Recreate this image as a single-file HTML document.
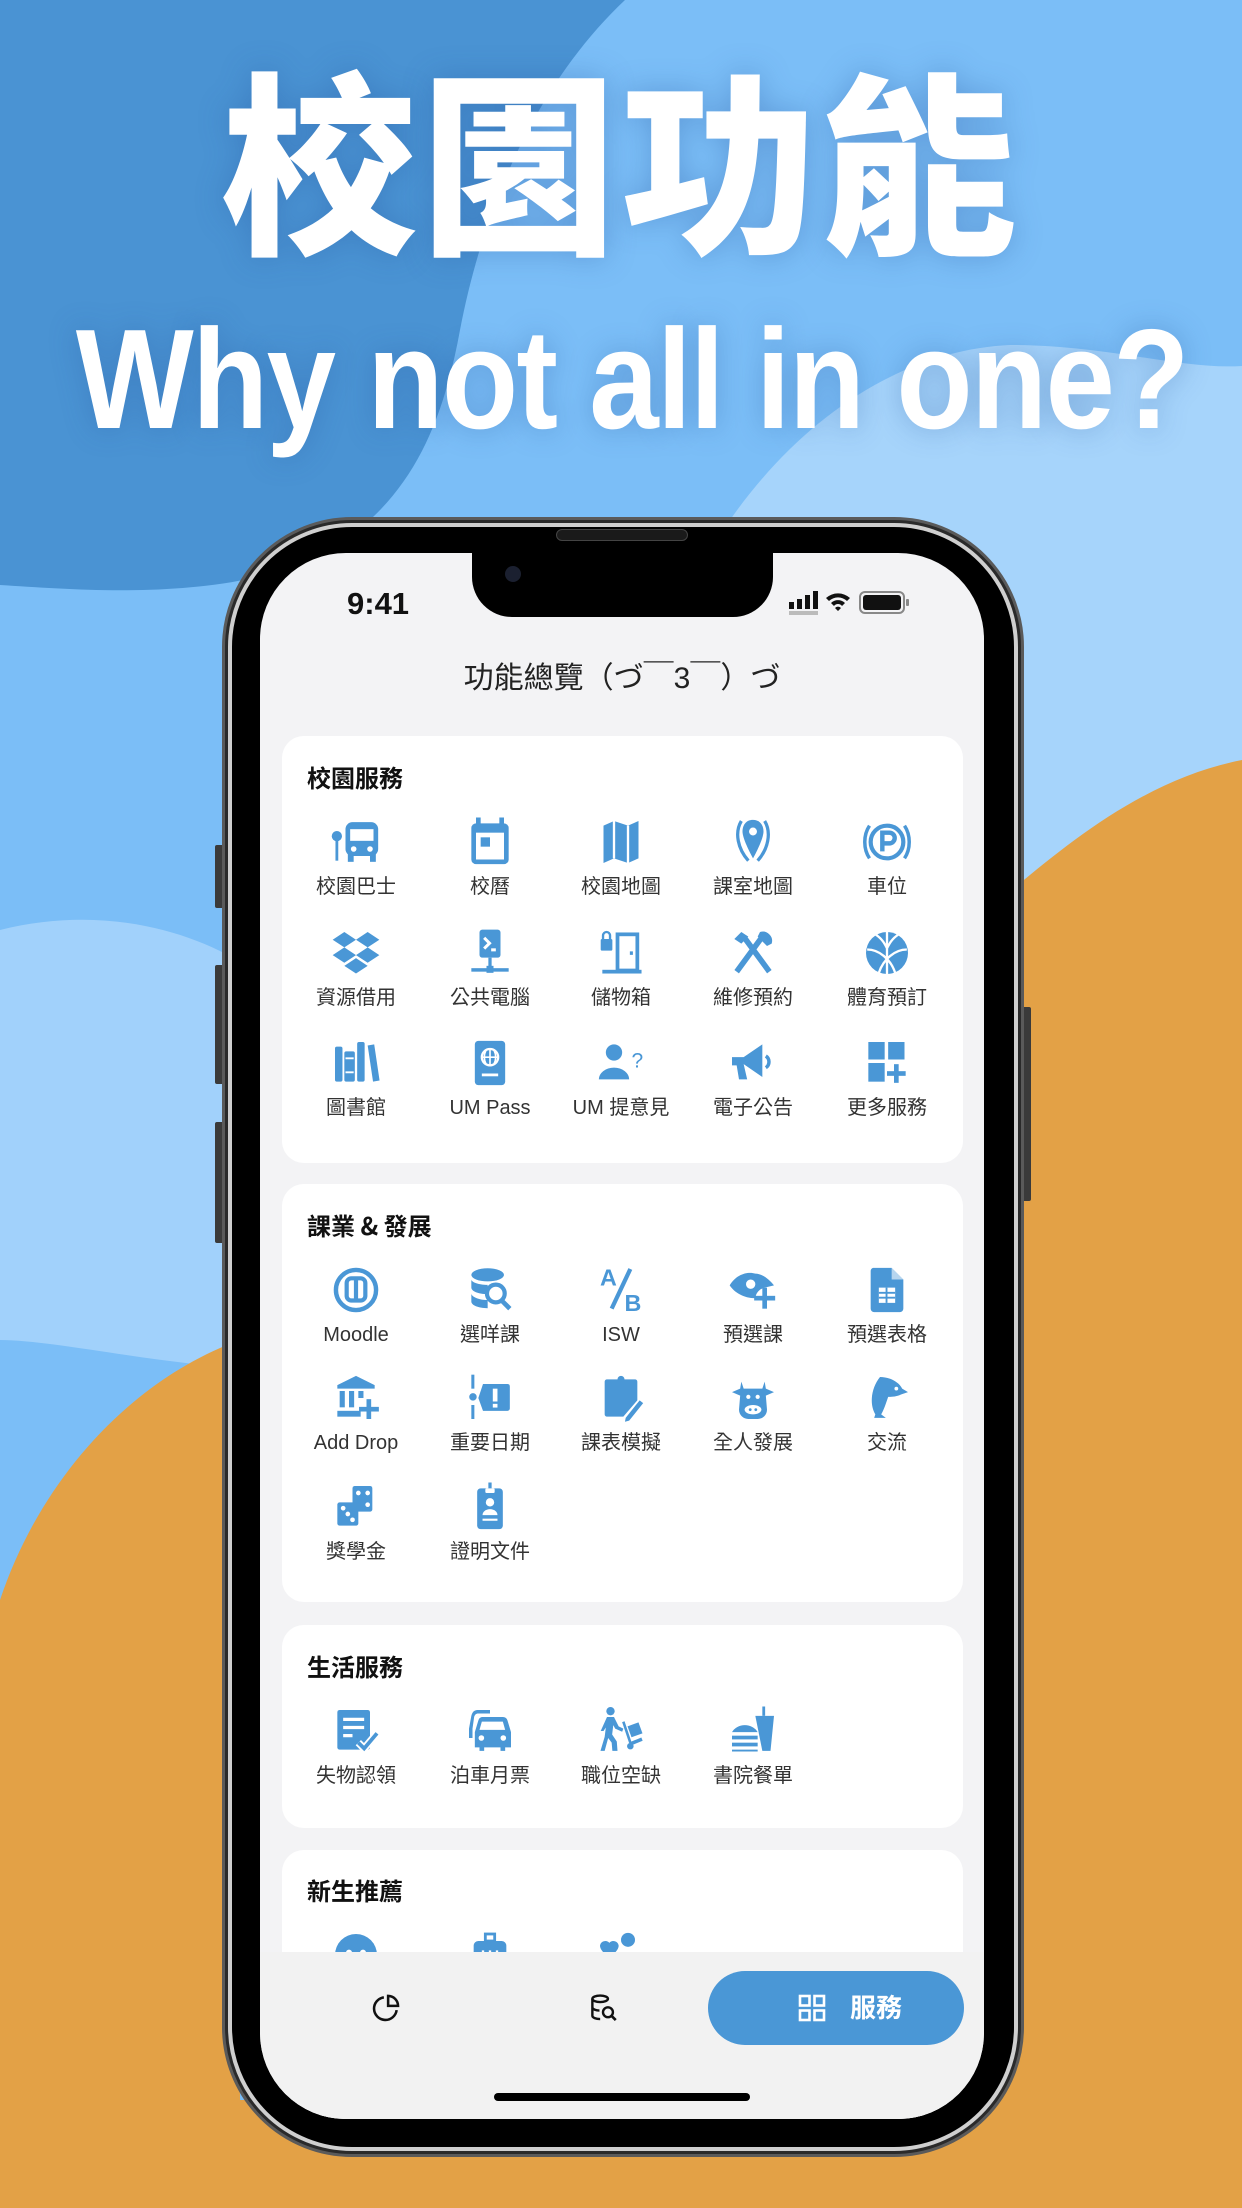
<!DOCTYPE html>
<html><head><meta charset="utf-8">
<style>
*{margin:0;padding:0;box-sizing:border-box}
body{width:1242px;height:2208px;overflow:hidden;position:relative;background:#7bbef7;font-family:"Liberation Sans","Noto Sans CJK TC",sans-serif}
.abs{position:absolute}
.t1{position:absolute;left:0;width:1242px;top:40px;text-align:center;font-family:"Noto Sans CJK TC",sans-serif;font-weight:900;font-size:196px;line-height:230px;color:#fff;letter-spacing:4px;text-shadow:0 0 30px rgba(40,90,160,.35)}
.t2{position:absolute;left:0;width:1242px;top:300px;text-align:center;font-family:"Liberation Sans",sans-serif;font-weight:bold;font-size:142px;line-height:160px;color:#fff;letter-spacing:-2px;text-shadow:0 0 30px rgba(40,90,160,.35);white-space:nowrap}
.t2 span{display:inline-block;transform:scaleX(.88)}
.screen{position:absolute;left:260px;top:553px;width:724px;height:1566px;border-radius:86px;overflow:hidden;background:#f3f3f5}
.card{position:absolute;left:22px;width:681px;background:#fff;border-radius:22px}
.hd{position:absolute;left:25px;font-family:"Noto Sans CJK TC",sans-serif;font-weight:bold;font-size:24px;color:#111;line-height:30px}
.it{position:absolute;width:130px;text-align:center}
.it svg{display:block;margin:0 auto;width:56px;height:56px;fill:#4a97d6}
.it span{display:block;margin-top:5px;font-family:"Liberation Sans","Noto Sans CJK TC",sans-serif;font-size:20px;line-height:24px;color:#333;white-space:nowrap}
</style></head><body>
<svg class="abs" style="left:0;top:0" width="1242" height="2208" viewBox="0 0 1242 2208">
<path d="M0 0H625C540 80 485 200 460 330C440 440 400 520 300 565C200 600 80 590 0 585Z" fill="#4a93d3"/>
<path d="M0 930C120 900 230 940 290 1000L290 1370C180 1370 60 1340 0 1340Z" fill="#a5d3fb" opacity=".9"/>
<path d="M730 520C800 420 900 350 1010 345C1110 345 1180 370 1242 366V900H730Z" fill="#a6d4fb"/>
<path d="M1242 760C1140 780 1060 850 1000 900L1000 2208H1242Z" fill="#e3a146"/>
<path d="M0 1600C40 1480 130 1380 240 1340L240 2208H0Z" fill="#e3a146"/>
<rect x="200" y="2100" width="850" height="108" fill="#e3a146"/>
</svg>
<div class="t1">校園功能</div>
<div class="t2"><span>Why not all in one?</span></div>

<div class="abs" style="left:215px;top:845px;width:10px;height:63px;background:#3a3a3a;border-radius:2px"></div>
<div class="abs" style="left:215px;top:965px;width:10px;height:119px;background:#3a3a3a;border-radius:2px"></div>
<div class="abs" style="left:215px;top:1122px;width:10px;height:121px;background:#3a3a3a;border-radius:2px"></div>
<div class="abs" style="left:1021px;top:1007px;width:10px;height:194px;background:#3a3a3a;border-radius:2px"></div>
<div class="abs" style="left:222px;top:517px;width:802px;height:1640px;border-radius:130px;background:#2a2a2a;border:3px solid #5a5a5a"></div>
<div class="abs" style="left:228px;top:523px;width:790px;height:1628px;border-radius:124px;background:#000;border:4px solid #cfcfcf"></div>
<div class="abs" style="left:234px;top:529px;width:778px;height:1616px;border-radius:118px;background:#000"></div>
<div class="abs" style="left:556px;top:529px;width:132px;height:12px;border-radius:6px;background:#1a1a1a;border:1px solid #444"></div>

<div class="screen">
 <div class="abs" style="left:212px;top:0;width:301px;height:64px;background:#000;border-radius:0 0 40px 40px"></div>
 <div class="abs" style="left:245px;top:13px;width:16px;height:16px;border-radius:50%;background:#1b2030"></div>
 <div class="abs" style="left:87px;top:33px;font-weight:bold;font-size:31px;color:#111">9:41</div>
 <svg class="abs" style="left:529px;top:36px" width="150" height="30" viewBox="0 0 150 30">
  <rect x="0" y="13" width="5" height="7" fill="#111"/><rect x="8" y="10" width="5" height="10" fill="#111"/><rect x="16" y="6" width="5" height="14" fill="#111"/><rect x="24" y="2" width="5" height="18" fill="#111"/>
  <rect x="0" y="22" width="29" height="4" fill="#bbb"/>
  <path d="M37 9a18 18 0 0 1 24 0l-3 3a13 13 0 0 0-18 0z M42 14a10 10 0 0 1 14 0l-3 3a5 5 0 0 0-8 0z M49 22l-3-3a4 4 0 0 1 6 0z" fill="#111"/>
  <rect x="71" y="3" width="44" height="21" rx="5" fill="none" stroke="#888" stroke-width="2"/><rect x="74" y="6" width="38" height="15" rx="3" fill="#111"/><rect x="117" y="10" width="3" height="7" rx="1" fill="#888"/>
 </svg>
 <div class="abs" style="left:0;width:724px;top:108px;text-align:center;font-family:'Liberation Sans','Noto Sans CJK TC',sans-serif;font-size:30px;color:#222;line-height:36px">功能總覽（づ￣3￣）づ</div>

 <div class="card" style="top:183px;height:427px"><div class="hd" style="top:26px">校園服務</div></div>
 <div class="card" style="top:631px;height:418px"><div class="hd" style="top:26px">課業 &amp; 發展</div></div>
 <div class="card" style="top:1072px;height:203px"><div class="hd" style="top:26px">生活服務</div></div>
 <div class="card" style="top:1297px;height:300px"><div class="hd" style="top:25px">新生推薦</div></div>

 <div class="it" style="left:31px;top:261px"><svg viewBox="0 0 24 24"><circle cx="3.8" cy="9.5" r="2.2"/><rect x="3.2" y="10" width="1.2" height="10"/><rect x="7.5" y="3.5" width="14" height="14.5" rx="3"/><rect x="9.5" y="6.5" width="10" height="5" fill="#fff"/><circle cx="11" cy="15" r="1.2" fill="#fff"/><circle cx="18" cy="15" r="1.2" fill="#fff"/><rect x="8.5" y="17" width="2.5" height="3.5"/><rect x="18" y="17" width="2.5" height="3.5"/></svg><span>校園巴士</span></div>
 <div class="it" style="left:165px;top:261px"><svg viewBox="0 0 24 24"><rect x="4" y="4" width="16" height="17.5" rx="2"/><rect x="6" y="1.5" width="2" height="4"/><rect x="16" y="1.5" width="2" height="4"/><rect x="6" y="8" width="12" height="11.5" fill="#fff"/><rect x="8" y="10" width="4" height="4"/></svg><span>校曆</span></div>
 <div class="it" style="left:296px;top:261px"><svg viewBox="0 0 24 24"><path d="M4.5 5L9 3L15 5L19.5 3V19L15 21L9 19L4.5 21Z"/><path d="M9 3V19M15 5V21" stroke="#fff" stroke-width="1"/></svg><span>校園地圖</span></div>
 <div class="it" style="left:428px;top:261px"><svg viewBox="0 0 24 24"><path d="M12 2.5C9 2.5 7.5 4.8 7.5 7.5C7.5 11 12 19 12 19C12 19 16.5 11 16.5 7.5C16.5 4.8 15 2.5 12 2.5Z"/><circle cx="12" cy="7.5" r="1.7" fill="#fff"/><path d="M7 3C4 8 5.5 15 10 20M17 3C20 8 18.5 15 14 20" fill="none" stroke="#4a97d6" stroke-width="1.4"/></svg><span>課室地圖</span></div>
 <div class="it" style="left:562px;top:261px"><svg viewBox="0 0 24 24"><circle cx="12" cy="12" r="7" fill="none" stroke="#4a97d6" stroke-width="1.8"/><path d="M10 16V8h3a2.3 2.3 0 0 1 0 4.6h-3" fill="none" stroke="#4a97d6" stroke-width="1.9"/><path d="M4.5 5C1.8 9 1.8 15 4.5 19M19.5 5c2.7 4 2.7 10 0 14" fill="none" stroke="#4a97d6" stroke-width="1.5"/></svg><span>車位</span></div>
 <div class="it" style="left:31px;top:372px"><svg viewBox="0 0 24 24"><path d="M7 3L12 6.3L7 9.6L2 6.3Z M17 3L22 6.3L17 9.6L12 6.3Z M7 9.6L12 12.9L7 16.2L2 12.9Z M17 9.6L22 12.9L17 16.2L12 12.9Z M12 14.2L17 17.5L12 20.8L7 17.5Z"/></svg><span>資源借用</span></div>
 <div class="it" style="left:165px;top:372px"><svg viewBox="0 0 24 24"><rect x="7.5" y="2" width="9" height="12" rx="1.2"/><path d="M9.5 5.5l2.3 2.3-2.3 2.3" fill="none" stroke="#fff" stroke-width="1.3"/><rect x="12.5" y="10" width="2" height="1.3" fill="#fff"/><rect x="11.3" y="14" width="1.4" height="4.5"/><rect x="4" y="18.5" width="16" height="1.5"/><rect x="10.5" y="17.5" width="3" height="3"/></svg><span>公共電腦</span></div>
 <div class="it" style="left:296px;top:372px"><svg viewBox="0 0 24 24"><rect x="3.3" y="6" width="5" height="5" rx=".6"/><path d="M4.3 6V4.5a1.5 1.5 0 0 1 3 0V6" fill="none" stroke="#4a97d6" stroke-width="1"/><rect x="10.5" y="4" width="8.5" height="15.5" fill="none" stroke="#4a97d6" stroke-width="1.6"/><rect x="15.8" y="11.3" width="1.3" height="1.5"/><rect x="4" y="19.2" width="16.8" height="1.6"/></svg><span>儲物箱</span></div>
 <div class="it" style="left:428px;top:372px"><svg viewBox="0 0 24 24"><path d="M5 20L16 5M8 5L19 20" stroke="#4a97d6" stroke-width="2.4"/><path d="M4 6l3-3 3 2-3 3z M15 3a4 4 0 0 1 5 5l-2 1-4-4z"/></svg><span>維修預約</span></div>
 <div class="it" style="left:562px;top:372px"><svg viewBox="0 0 24 24"><circle cx="12" cy="12" r="9"/><path d="M12 3v18M3.5 10.5c5 0 10 4 12 10M20.5 10.5c-5 0-10 4-12 10M7 4c3 2 4 4 5 6M17 4c-3 2-4 4-5 6" fill="none" stroke="#fff" stroke-width="1"/></svg><span>體育預訂</span></div>
 <div class="it" style="left:31px;top:482px"><svg viewBox="0 0 24 24"><rect x="3" y="5" width="3.2" height="15" rx=".8"/><rect x="7" y="7" width="4.5" height="13" rx=".8"/><rect x="12.5" y="3" width="3.2" height="17" rx=".8"/><path d="M17 4.5l2.8-.5 2.3 15.5-2.8.5z"/><path d="M7.5 10h3.5M7.5 16h3.5" stroke="#fff" stroke-width=".8"/></svg><span>圖書館</span></div>
 <div class="it" style="left:165px;top:482px"><svg viewBox="0 0 24 24"><rect x="5.5" y="2.5" width="13" height="19" rx="1.5"/><circle cx="12" cy="9.5" r="3.5" fill="none" stroke="#fff" stroke-width="1"/><path d="M8.5 9.5h7M12 6v7M10.3 6.5c-1 2-1 4 0 6M13.7 6.5c1 2 1 4 0 6" fill="none" stroke="#fff" stroke-width=".7"/><rect x="8.5" y="16.5" width="7" height="1.2" fill="#fff"/></svg><span>UM Pass</span></div>
 <div class="it" style="left:296px;top:482px"><svg viewBox="0 0 24 24"><circle cx="9" cy="7.5" r="3.5"/><path d="M2.5 19a6.5 5 0 0 1 13 0z"/><text x="16.5" y="14" font-size="9" font-family="Liberation Sans" fill="#4a97d6">?</text></svg><span>UM 提意見</span></div>
 <div class="it" style="left:428px;top:482px"><svg viewBox="0 0 24 24"><path d="M3 9.5h5l8-5.5v14l-8-5.5H8l1.5 6.5H6L5 13H3z"/><path d="M17.5 9a3 3 0 0 1 0 5" fill="none" stroke="#4a97d6" stroke-width="1.5"/></svg><span>電子公告</span></div>
 <div class="it" style="left:562px;top:482px"><svg viewBox="0 0 24 24"><rect x="4" y="3" width="7" height="7.5"/><rect x="12.5" y="3" width="7" height="7.5"/><rect x="4" y="12" width="7" height="8"/><rect x="15" y="12.5" width="2" height="8"/><rect x="12" y="15.5" width="8" height="2"/></svg><span>更多服務</span></div>

 <div class="it" style="left:31px;top:709px"><svg viewBox="0 0 24 24"><circle cx="12" cy="12" r="8.6" fill="none" stroke="#4a97d6" stroke-width="1.9"/><rect x="8" y="7" width="8" height="9.5" rx="2" fill="none" stroke="#4a97d6" stroke-width="1.8"/><rect x="11.1" y="7.5" width="1.8" height="9"/></svg><span>Moodle</span></div>
 <div class="it" style="left:165px;top:709px"><svg viewBox="0 0 24 24"><ellipse cx="11" cy="5.5" rx="7" ry="2.8"/><path d="M4 7.5v3.5c0 1.5 3 2.8 7 2.8V9.8c-4 0-7-1.2-7-2.3zM4 13.5v3.5c0 1.5 3 2.8 7 2.8v-3.5c-4 0-7-1.5-7-2.8z"/><circle cx="14.5" cy="13.5" r="3.8" fill="none" stroke="#4a97d6" stroke-width="1.8"/><path d="M17 16.5l3.5 3.5" stroke="#4a97d6" stroke-width="2"/></svg><span>選咩課</span></div>
 <div class="it" style="left:296px;top:709px"><svg viewBox="0 0 24 24"><text x="3" y="10" font-size="10" font-weight="bold" font-family="Liberation Sans" fill="#4a97d6">A</text><text x="13.5" y="21" font-size="10" font-weight="bold" font-family="Liberation Sans" fill="#4a97d6">B</text><path d="M16 3L8 20" stroke="#4a97d6" stroke-width="1.8"/></svg><span>ISW</span></div>
 <div class="it" style="left:428px;top:709px"><svg viewBox="0 0 24 24"><path d="M2 10c3-5 8-6 11-5 3 0 6 2.5 8 5l-4 1a5 5 0 0 0-4 4.5c-5 0-9-2.5-11-5.5z"/><circle cx="11" cy="9.5" r="2" fill="#fff"/><rect x="16" y="11" width="2" height="9"/><rect x="12.5" y="14.5" width="9" height="2"/></svg><span>預選課</span></div>
 <div class="it" style="left:562px;top:709px"><svg viewBox="0 0 24 24"><path d="M6 2.5h8l5 5V20a1.5 1.5 0 0 1-1.5 1.5h-11A1.5 1.5 0 0 1 5 20V4a1.5 1.5 0 0 1 1-1.5z"/><path d="M14 2.5v5h5" fill="#fff" opacity=".6"/><path d="M8.5 11h7v6.5h-7z" fill="#fff"/><path d="M8.5 13.2h7M8.5 15.3h7M11.8 11v6.5" stroke="#4a97d6" stroke-width=".8"/></svg><span>預選表格</span></div>

 <div class="it" style="left:31px;top:817px"><svg viewBox="0 0 24 24"><path d="M12 2.5L20 6.5V8H4V6.5z"/><rect x="5" y="9" width="2.2" height="7"/><rect x="9" y="9" width="2.2" height="7"/><rect x="13" y="9" width="2.2" height="3"/><rect x="4" y="17.5" width="10" height="2.5"/><rect x="16.5" y="12.5" width="2" height="8.5"/><rect x="13.3" y="15.8" width="8.5" height="2"/></svg><span>Add Drop</span></div>
 <div class="it" style="left:165px;top:817px"><svg viewBox="0 0 24 24"><rect x="4" y="2" width="1.3" height="6"/><rect x="4" y="15" width="1.3" height="6"/><circle cx="4.7" cy="11.5" r="1.6"/><path d="M9 6h10.5a1 1 0 0 1 1 1v9.5a1 1 0 0 1-1 1H9l-2-5.5z"/><rect x="13.2" y="8" width="2" height="5.5" fill="#fff"/><rect x="13.2" y="14.5" width="2" height="1.6" fill="#fff"/></svg><span>重要日期</span></div>
 <div class="it" style="left:296px;top:817px"><svg viewBox="0 0 24 24"><path d="M6 4h4.5a1.5 1.5 0 0 1 3 0H18a1 1 0 0 1 1 1v8l-6 7H6a1 1 0 0 1-1-1V5a1 1 0 0 1 1-1z"/><path d="M14 20.5l6-7.5 1.5 1.2-6 7.5-1.8.5z"/></svg><span>課表模擬</span></div>
 <div class="it" style="left:428px;top:817px"><svg viewBox="0 0 24 24"><path d="M7 5l1 3h8l1-3 .5 3L21 9.5 17.5 11l.5 6a4 4 0 0 1-4 4h-4a4 4 0 0 1-4-4l.5-6L3 9.5 6.5 8z"/><circle cx="10" cy="11.5" r=".9" fill="#fff"/><circle cx="14" cy="11.5" r=".9" fill="#fff"/><ellipse cx="12" cy="17" rx="3.6" ry="2" fill="#fff"/><circle cx="10.8" cy="17" r=".6"/><circle cx="13.2" cy="17" r=".6"/></svg><span>全人發展</span></div>
 <div class="it" style="left:562px;top:817px"><svg viewBox="0 0 24 24"><path d="M9 3c4 0 8 2 9.5 5l2.5 1.5-3 1c-2 1-4 1-5.5 1-1 3-2 6-3 7.5l2 1.5H6.5L7 19C4.5 15 5 8 9 3z"/><circle cx="16" cy="8" r=".8" fill="#fff"/></svg><span>交流</span></div>

 <div class="it" style="left:31px;top:926px"><svg viewBox="0 0 24 24"><rect x="10.5" y="3" width="8.5" height="11" rx="1"/><rect x="4" y="10" width="9" height="10" rx="1"/><circle cx="13" cy="6" r="1" fill="#fff"/><circle cx="17" cy="6" r="1" fill="#fff"/><circle cx="17" cy="11" r="1" fill="#fff"/><circle cx="6.5" cy="12.5" r="1" fill="#fff"/><circle cx="8.5" cy="15" r="1" fill="#fff"/><circle cx="10.5" cy="17.5" r="1" fill="#fff"/></svg><span>獎學金</span></div>
 <div class="it" style="left:165px;top:926px"><svg viewBox="0 0 24 24"><rect x="11.3" y="1.5" width="1.4" height="4"/><rect x="6.5" y="4" width="11" height="17.5" rx="1.5"/><rect x="10" y="4" width="4" height="2" rx=".5" fill="#fff"/><circle cx="12" cy="10" r="1.8" fill="#fff"/><path d="M8.8 15.5a3.2 2.6 0 0 1 6.4 0z" fill="#fff"/><rect x="8.8" y="17" width="6.4" height=".9" fill="#fff"/></svg><span>證明文件</span></div>

 <div class="it" style="left:31px;top:1150px"><svg viewBox="0 0 24 24"><rect x="4" y="3" width="14" height="17" rx="1"/><path d="M6.5 7h9M6.5 10.5h9M6.5 14h4" stroke="#fff" stroke-width="1.4"/><path d="M13 17l2.5 2.5L21 13" fill="none" stroke="#fff" stroke-width="3.2"/><path d="M13 17l2.5 2.5L21 13" fill="none" stroke="#4a97d6" stroke-width="1.6"/></svg><span>失物認領</span></div>
 <div class="it" style="left:165px;top:1150px"><svg viewBox="0 0 24 24"><path d="M4 5.5c.5-2 1.5-2.5 3-2.5h5v1.5H7c-1 0-1.5.5-1.8 1.5L4.5 11v4H3V11z"/><path d="M8.5 6h9a2 2 0 0 1 2 1.5l1.5 5V19h-2.5v1.5h-2V19H9.5v1.5h-2V19H5.5v-6.5l1.5-5A2 2 0 0 1 8.5 6z"/><path d="M8.5 8h9l1 3.5h-11z" fill="#fff"/><circle cx="8.3" cy="15" r="1.2" fill="#fff"/><circle cx="17.7" cy="15" r="1.2" fill="#fff"/></svg><span>泊車月票</span></div>
 <div class="it" style="left:296px;top:1150px"><svg viewBox="0 0 24 24"><circle cx="7.5" cy="3.5" r="1.8"/><path d="M6 6h3l2 4 2 1-.5 1.3-3-1.3-.8-1.5-.5 4 2 3 .3 4H8.3l-.3-3.5-1.5-2L5 20.5H3.2L5 14.5l.5-4L4.5 12H3.3z"/><path d="M13 8l3 9" stroke="#4a97d6" stroke-width="1.1"/><rect x="15.5" y="9" width="5" height="5" transform="rotate(-20 18 11.5)"/><path d="M16 17.5l5-2" stroke="#4a97d6" stroke-width="1.5"/><circle cx="16" cy="18.5" r="1.4"/></svg><span>職位空缺</span></div>
 <div class="it" style="left:428px;top:1150px"><svg viewBox="0 0 24 24"><rect x="16" y="1.5" width="1.2" height="4"/><path d="M13 5.5h8l-1.5 15h-3.5z"/><path d="M3 12.5a6 5 0 0 1 11 0z"/><rect x="3" y="14" width="11" height="1.6"/><rect x="3" y="17" width="11" height="1.6"/><path d="M3 20h11v.8H3z"/></svg><span>書院餐單</span></div>

 <div class="it" style="left:31px;top:1374px"><svg viewBox="0 0 24 24"><circle cx="12" cy="12" r="9"/><circle cx="9" cy="11" r="1.3" fill="#fff"/><circle cx="15" cy="11" r="1.3" fill="#fff"/></svg></div>
 <div class="it" style="left:165px;top:1374px"><svg viewBox="0 0 24 24"><rect x="10" y="3" width="4" height="3" fill="none" stroke="#4a97d6" stroke-width="1.2"/><rect x="5" y="6" width="14" height="14" rx="2"/><path d="M9 10v6M12 10v6M15 10v6" stroke="#fff" stroke-width="1"/></svg></div>
 <div class="it" style="left:296px;top:1374px"><svg viewBox="0 0 24 24"><circle cx="15" cy="5.5" r="3"/><path d="M3 8a2.3 2.3 0 0 1 4-1.2A2.3 2.3 0 0 1 11 8c0 2.5-4 5-4 5S3 10.5 3 8z"/><path d="M9 20a6 5 0 0 1 12 0z"/></svg></div>

 <div class="abs" style="left:0;top:1399px;width:724px;height:167px;background:#f2f2f2"></div>
 <svg class="abs" style="left:109px;top:1438px" width="34" height="34" viewBox="0 0 24 24"><path d="M10.5 4.5a8 8 0 1 0 9 9" fill="none" stroke="#111" stroke-width="1.8"/><path d="M13.5 3.5v7h7a7 7 0 0 0-7-7z" fill="none" stroke="#111" stroke-width="1.8"/></svg>
 <svg class="abs" style="left:326px;top:1438px" width="34" height="34" viewBox="0 0 24 24"><ellipse cx="10" cy="5.5" rx="5.5" ry="2.3" fill="none" stroke="#111" stroke-width="1.7"/><path d="M4.5 5.5v12c0 1.3 2.5 2.3 5.5 2.3M4.5 11.5c0 1.3 2.5 2.3 5 2.3" fill="none" stroke="#111" stroke-width="1.7"/><circle cx="15.5" cy="15" r="3.5" fill="none" stroke="#111" stroke-width="1.7"/><path d="M18 17.5l3 3" stroke="#111" stroke-width="1.9"/></svg>
 <div class="abs" style="left:448px;top:1418px;width:256px;height:74px;border-radius:37px;background:#4a97d6"></div>
 <svg class="abs" style="left:538px;top:1441px" width="28" height="28" viewBox="0 0 28 28"><g fill="none" stroke="#fff" stroke-width="2.6"><rect x="2" y="2" width="9.5" height="9.5"/><rect x="16.5" y="2" width="9.5" height="9.5"/><rect x="2" y="16.5" width="9.5" height="9.5"/><rect x="16.5" y="16.5" width="9.5" height="9.5"/></g></svg>
 <div class="abs" style="left:590px;top:1436px;font-family:'Noto Sans CJK TC',sans-serif;font-weight:bold;font-size:26px;line-height:36px;color:#fff">服務</div>
 <div class="abs" style="left:234px;top:1540px;width:256px;height:8px;border-radius:4px;background:#000"></div>
</div>
</body></html>
